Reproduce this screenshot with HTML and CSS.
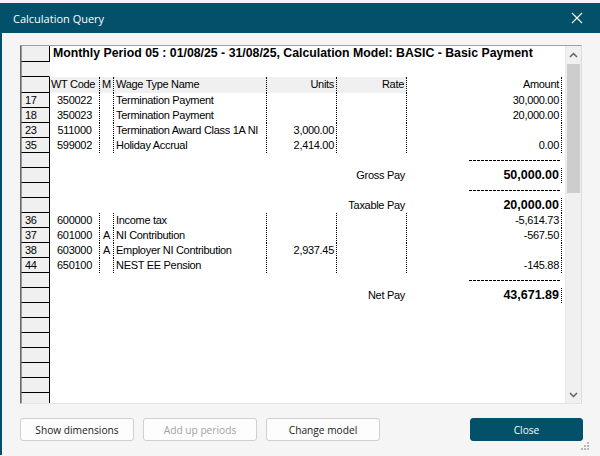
FILE: index.html
```html
<!DOCTYPE html>
<html>
<head>
<meta charset="utf-8">
<link rel="stylesheet" href="styles.css">
</head>
<body>
<div class="desk"></div>
<div class="dialog">
  <div class="titlebar">
    <span class="title">Calculation Query</span>
    <svg class="close-x" width="12" height="12" viewBox="0 0 12 12"><path d="M1 1 L11 11 M11 1 L1 11" stroke="#fff" stroke-width="1.1" fill="none"/></svg>
  </div>
  <div class="content">
    <div class="grid">
      <div class="rows">
        <div class="row r-title"><div class="rh"></div><div class="span title-text">Monthly Period 05 : 01/08/25 - 31/08/25, Calculation Model: BASIC - Basic Payment</div></div>
        <div class="row r-blank"><div class="rh rh-plain"></div><div class="span"></div></div>
        <div class="row r-head">
          <div class="rh"></div>
          <div class="c sep gray l1">WT Code</div>
          <div class="c sep gray l2">M</div>
          <div class="c sep gray l2">Wage Type Name</div>
          <div class="c sep gray r">Units</div>
          <div class="c sep gray r">Rate</div>
          <div class="c sep r">Amount</div>
          <div class="c"></div>
        </div>
        <div class="row"><div class="rh">17</div><div class="c sep ctr">350022</div><div class="c sep ctr"></div><div class="c sep l2">Termination Payment</div><div class="c sep r"></div><div class="c sep r"></div><div class="c sep r">30,000.00</div><div class="c"></div></div>
        <div class="row"><div class="rh">18</div><div class="c sep ctr">350023</div><div class="c sep ctr"></div><div class="c sep l2">Termination Payment</div><div class="c sep r"></div><div class="c sep r"></div><div class="c sep r">20,000.00</div><div class="c"></div></div>
        <div class="row"><div class="rh">23</div><div class="c sep ctr">511000</div><div class="c sep ctr"></div><div class="c sep l2">Termination Award Class 1A NI</div><div class="c sep r">3,000.00</div><div class="c sep r"></div><div class="c sep r"></div><div class="c"></div></div>
        <div class="row"><div class="rh">35</div><div class="c sep ctr">599002</div><div class="c sep ctr"></div><div class="c sep l2">Holiday Accrual</div><div class="c sep r">2,414.00</div><div class="c sep r"></div><div class="c sep r">0.00</div><div class="c"></div></div>
        <div class="row"><div class="rh"></div><div class="c"></div><div class="c"></div><div class="c"></div><div class="c"></div><div class="c"></div><div class="c"><span class="dash"></span></div><div class="c"></div></div>
        <div class="row"><div class="rh"></div><div class="c"></div><div class="c"></div><div class="c"></div><div class="c"></div><div class="c r">Gross Pay</div><div class="c sep r b">50,000.00</div><div class="c"></div></div>
        <div class="row"><div class="rh"></div><div class="c"></div><div class="c"></div><div class="c"></div><div class="c"></div><div class="c"></div><div class="c"><span class="dash"></span></div><div class="c"></div></div>
        <div class="row"><div class="rh"></div><div class="c"></div><div class="c"></div><div class="c"></div><div class="c"></div><div class="c r">Taxable Pay</div><div class="c sep r b">20,000.00</div><div class="c"></div></div>
        <div class="row"><div class="rh">36</div><div class="c sep ctr">600000</div><div class="c sep ctr"></div><div class="c sep l2">Income tax</div><div class="c sep r"></div><div class="c sep r"></div><div class="c sep r">-5,614.73</div><div class="c"></div></div>
        <div class="row"><div class="rh">37</div><div class="c sep ctr">601000</div><div class="c sep ctr">A</div><div class="c sep l2">NI Contribution</div><div class="c sep r"></div><div class="c sep r"></div><div class="c sep r">-567.50</div><div class="c"></div></div>
        <div class="row"><div class="rh">38</div><div class="c sep ctr">603000</div><div class="c sep ctr">A</div><div class="c sep l2">Employer NI Contribution</div><div class="c sep r">2,937.45</div><div class="c sep r"></div><div class="c sep r"></div><div class="c"></div></div>
        <div class="row"><div class="rh">44</div><div class="c sep ctr">650100</div><div class="c sep ctr"></div><div class="c sep l2">NEST EE Pension</div><div class="c sep r"></div><div class="c sep r"></div><div class="c sep r">-145.88</div><div class="c"></div></div>
        <div class="row"><div class="rh"></div><div class="c"></div><div class="c"></div><div class="c"></div><div class="c"></div><div class="c"></div><div class="c"><span class="dash"></span></div><div class="c"></div></div>
        <div class="row"><div class="rh"></div><div class="c"></div><div class="c"></div><div class="c"></div><div class="c"></div><div class="c r">Net Pay</div><div class="c sep r b">43,671.89</div><div class="c"></div></div>
        <div class="row"><div class="rh"></div></div>
        <div class="row"><div class="rh"></div></div>
        <div class="row"><div class="rh"></div></div>
        <div class="row"><div class="rh"></div></div>
        <div class="row"><div class="rh"></div></div>
        <div class="row"><div class="rh"></div></div>
        <div class="row"><div class="rh"></div></div>
        <div class="row"><div class="rh"></div></div>
      </div>
      <div class="vscroll">
        <div class="arrow up"><svg width="9" height="6" viewBox="0 0 9 6"><path d="M1 5 L4.5 1.5 L8 5" stroke="#606060" stroke-width="1.5" fill="none"/></svg></div>
        <div class="thumb"></div>
        <div class="track"></div>
        <div class="arrow down"><svg width="9" height="6" viewBox="0 0 9 6"><path d="M1 1 L4.5 4.5 L8 1" stroke="#606060" stroke-width="1.5" fill="none"/></svg></div>
      </div>
    </div>
    <div class="buttons">
      <button class="btn">Show dimensions</button>
      <button class="btn disabled">Add up periods</button>
      <button class="btn">Change model</button>
      <button class="btn primary">Close</button>
    </div>
  </div>
  <svg class="grip" width="9" height="9" viewBox="0 0 9 9"><g fill="#b8b8b8"><rect x="6" y="0" width="2" height="2"/><rect x="3" y="3" width="2" height="2"/><rect x="6" y="3" width="2" height="2"/><rect x="0" y="6" width="2" height="2"/><rect x="3" y="6" width="2" height="2"/><rect x="6" y="6" width="2" height="2"/></g></svg>
</div>
</body>
</html>
```

FILE: styles.css
```css
* { box-sizing: border-box; }
html, body { margin: 0; padding: 0; }
body {
  width: 600px;
  height: 456px;
  overflow: hidden;
  background: #f5f5f5;
  font-family: "Liberation Sans", Arial, sans-serif;
}
.desk {
  height: 4px;
  background: #f3f3f3;
  border-bottom: 1px solid #d8d8d8;
}
.dialog {
  position: relative;
  height: 452px;
  border-left: 2px solid #02506a;
  background: #f5f5f5;
}
.titlebar {
  height: 30px;
  margin-top: -1px;
  background: #02506a;
  display: flex;
  align-items: center;
  padding-left: 11px;
}
.title {
  font-family: "Open Sans", sans-serif;
  font-size: 11px;
  color: #ffffff;
  margin-top: 1px;
}
.close-x {
  margin-left: auto;
  margin-right: 17px;
  margin-top: -1px;
}
.content {
  padding: 12px 0 0 18px;
}
.grid {
  width: 562px;
  height: 359px;
  display: flex;
  border-top: 1px solid #a0a0a0;
  border-left: 1px solid #696969;
  border-right: 1px solid #dcdcdc;
  border-bottom: 1px solid #e3e3e3;
  background: #ffffff;
  overflow: hidden;
}
.rows {
  width: 544px;
  flex: none;
}
.row {
  display: grid;
  grid-template-columns: 29px 50px 14px 153px 70px 70px 155px 3px;
  height: 15px;
  font-size: 11px;
  letter-spacing: -0.3px;
  line-height: 14px;
  color: #000;
}
.row.r-title { height: 16px; }
.row.r-head { height: 16px; }
.rh {
  background: #f0f0f0;
  border-right: 1px solid #000;
  border-bottom: 1px solid #000;
  border-left: 1px solid #9a9a9a;
  padding-left: 3px;
  line-height: 14px;
}
.r-blank .rh { border-right-color: #f0f0f0; }
.span {
  grid-column: 2 / 9;
}
.title-text {
  font-weight: bold;
  font-size: 12.3px;
  letter-spacing: 0;
  padding-left: 3px;
  line-height: 15px;
  white-space: nowrap;
}
.c {
  white-space: nowrap;
  overflow: visible;
  position: relative;
}
.r-head .c { line-height: 15px; }
.sep { border-right: 1px dotted #000; }
.gray { background: #f0f0f0; }
.l1 { padding-left: 1px; }
.l2 { padding-left: 2px; }
.r { text-align: right; padding-right: 2px; }
.ctr { text-align: center; }
.b {
  font-weight: bold;
  font-size: 12.5px;
  letter-spacing: 0;
}
.dash {
  position: absolute;
  right: 1px;
  top: 7px;
  width: 92px;
  height: 1px;
  background: repeating-linear-gradient(to right, #000 0 3px, transparent 3px 4px);
}
.vscroll {
  width: 16px;
  flex: none;
  background: #f0f0f0;
  border-left: 1px solid #e8e8e8;
  display: flex;
  flex-direction: column;
}
.arrow {
  height: 17px;
  display: flex;
  align-items: center;
  justify-content: center;
}
.thumb {
  height: 129px;
  margin: 1px 1px 0 1px;
  background: #cdcdcd;
}
.track { flex: 1; }
.buttons {
  display: flex;
  margin-top: 14px;
  width: 563px;
}
.btn {
  width: 114px;
  height: 23px;
  margin-right: 9px;
  border: 1px solid #cfcfcf;
  border-radius: 3px;
  background: #fdfdfd;
  font-family: "Open Sans", sans-serif;
  font-size: 10.2px;
  color: #1a1a1a;
  padding: 0;
}
.btn.disabled { color: #a2a2a2; }
.btn.primary {
  margin-left: auto;
  margin-right: 0;
  width: 113px;
  background: #02506a;
  border-color: #02506a;
  color: #ffffff;
}
.grip {
  position: absolute;
  right: 10px;
  bottom: 4px;
}
```
